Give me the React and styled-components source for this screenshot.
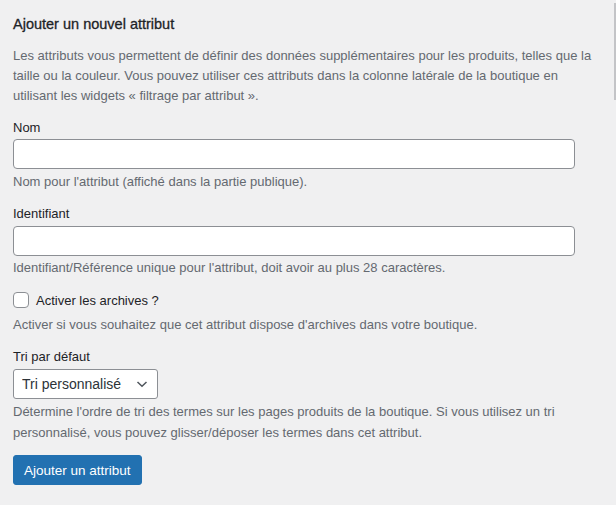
import styled, { createGlobalStyle } from "styled-components";

const GlobalStyle = createGlobalStyle`
  html, body {
    margin: 0;
    padding: 0;
    background: #f0f0f1;
  }
  body {
    font-family: "Liberation Sans", Arial, sans-serif;
    font-size: 13px;
    color: #3c434a;
  }
  * { box-sizing: border-box; }
`;

const Page = styled.div`
  display: flex;
  align-items: flex-start;
  width: 616px;
  height: 505px;
  overflow: hidden;
`;

const FormCol = styled.div`
  flex: 0 0 605px;
  padding: 14px 0 0 13px;
`;

const SideEdge = styled.div`
  flex: 0 0 2px;
  margin: 3px 0 0 9px;
  height: 97px;
  background: #c3c4c7;
`;

const Title = styled.h2`
  margin: 0 0 12px;
  font-size: 14.5px;
  line-height: 20px;
  font-weight: 400;
  -webkit-text-stroke: 0.3px #1d2327;
  color: #1d2327;
`;

const Intro = styled.p`
  margin: 0 0 12px;
  line-height: 20px;
  color: #646970;
`;

const Field = styled.div`
  display: flex;
  flex-direction: column;
  margin-bottom: 12px;
`;

const Label = styled.label`
  line-height: 20px;
  color: #1d2327;
  margin-bottom: ${(p) => p.$gap || 2}px;
`;

const TextInput = styled.input`
  width: 95%;
  height: 30px;
  padding: 0 8px;
  border: 1px solid #8c8f94;
  border-radius: 4px;
  background: #fff;
  font: inherit;
  color: #2c3338;
`;

const Help = styled.p`
  margin: ${(p) => p.$top || 2}px 0 0;
  line-height: ${(p) => p.$lh || 20}px;
  color: #646970;
`;

const CheckRow = styled.label`
  display: flex;
  align-items: center;
  gap: 7px;
  height: 20px;
  color: #1d2327;
  font-size: 13px;
`;

const Checkbox = styled.input.attrs({ type: "checkbox" })`
  appearance: none;
  margin: 0;
  width: 16px;
  height: 16px;
  border: 1px solid #8c8f94;
  border-radius: 4px;
  background: #fff;
`;

const SelectWrap = styled.div`
  position: relative;
  width: 145px;
  height: 30px;
`;

const Select = styled.select`
  appearance: none;
  width: 100%;
  height: 100%;
  padding: 0 24px 0 8px;
  border: 1px solid #8c8f94;
  border-radius: 3px;
  background: #fff;
  font-family: "Liberation Sans", Arial, sans-serif;
  font-size: 14px;
  color: #2c3338;
`;

const Chevron = styled.svg`
  position: absolute;
  right: 10px;
  top: 10px;
  pointer-events: none;
`;

const Button = styled.button`
  align-self: flex-start;
  height: 30px;
  padding: 0 10px;
  border: 1px solid #2271b1;
  border-radius: 3px;
  background: #2271b1;
  color: #fff;
  font-family: "Liberation Sans", Arial, sans-serif;
  font-size: 13.5px;
  cursor: pointer;
`;

export default function App() {
  return (
    <Page>
      <GlobalStyle />
      <FormCol>
        <Title>Ajouter un nouvel attribut</Title>
        <Intro>
          Les attributs vous permettent de définir des données supplémentaires pour les produits, telles que la
          taille ou la couleur. Vous pouvez utiliser ces attributs dans la colonne latérale de la boutique en
          utilisant les widgets « filtrage par attribut ».
        </Intro>

        <Field>
          <Label htmlFor="attr-name" $gap={1}>Nom</Label>
          <TextInput id="attr-name" type="text" />
          <Help $top={3}>Nom pour l'attribut (affiché dans la partie publique).</Help>
        </Field>

        <Field>
          <Label htmlFor="attr-slug">Identifiant</Label>
          <TextInput id="attr-slug" type="text" />
          <Help>Identifiant/Référence unique pour l'attribut, doit avoir au plus 28 caractères.</Help>
        </Field>

        <Field>
          <CheckRow>
            <Checkbox />
            Activer les archives ?
          </CheckRow>
          <Help $top={5}>Activer si vous souhaitez que cet attribut dispose d'archives dans votre boutique.</Help>
        </Field>

        <Field>
          <Label htmlFor="attr-order">Tri par défaut</Label>
          <SelectWrap>
            <Select id="attr-order" defaultValue="custom">
              <option value="custom">Tri personnalisé</option>
              <option value="name">Nom</option>
              <option value="id">ID du terme</option>
            </Select>
            <Chevron width="12" height="10" viewBox="0 0 12 10">
              <path d="M1.5 3 L6 7.3 L10.5 3" fill="none" stroke="#50575e" strokeWidth="1.5" />
            </Chevron>
          </SelectWrap>
          <Help $lh={21}>
            Détermine l'ordre de tri des termes sur les pages produits de la boutique. Si vous utilisez un tri
            personnalisé, vous pouvez glisser/déposer les termes dans cet attribut.
          </Help>
        </Field>

        <Button type="button">Ajouter un attribut</Button>
      </FormCol>
      <SideEdge />
    </Page>
  );
}
